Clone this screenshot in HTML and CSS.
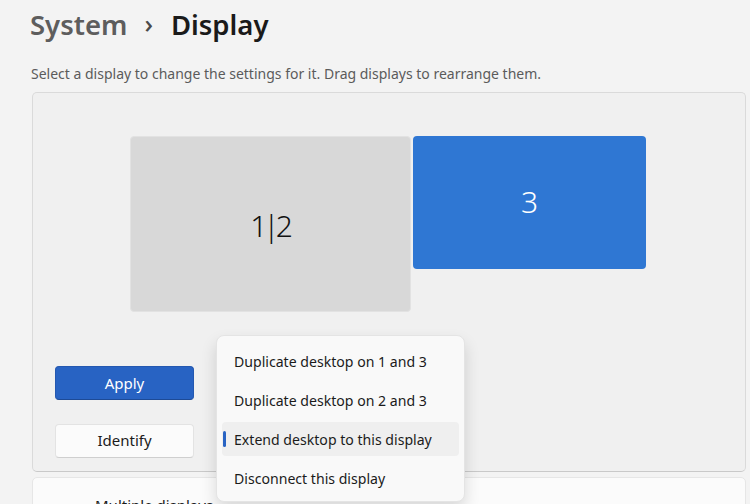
FILE: index.html
```html
<!DOCTYPE html>
<html>
	<head>
		<meta charset="UTF-8">
		<title>Settings - Display</title>
		<link rel="stylesheet" href="styles.css">
	</head>
	<body>
		<div id="page">
			<h1 class="breadcrumb">
				<span class="crumb">System</span>
				<span class="chevron">&#8250;</span>
				<span class="current">Display</span>
			</h1>
			<p class="hint">Select a display to change the settings for it. Drag displays to rearrange them.</p>

			<div class="panel">
				<!-- monitor layout, positions are the arrangement itself -->
				<div class="arrangement">
					<div class="monitor mon-12">1|2</div>
					<div class="monitor mon-3 selected">3</div>
				</div>
				<div class="actions">
					<div class="row">
						<button class="btn primary">Apply</button>
						<div class="combo"></div>
					</div>
					<div class="row">
						<button class="btn">Identify</button>
					</div>
				</div>

				<div class="menu">
					<div class="item">Duplicate desktop on 1 and 3</div>
					<div class="item">Duplicate desktop on 2 and 3</div>
					<div class="item active">Extend desktop to this display</div>
					<div class="item">Disconnect this display</div>
				</div>
			</div>

			<div class="card">
				<span class="card-title">Multiple displays</span>
			</div>
		</div>
	</body>
</html>
```

FILE: styles.css
```css
body {
	margin: 0;
	background-color: #f3f3f3;
	font-family: "Noto Sans", "Open Sans", sans-serif;
	color: #1b1b1b;
	overflow: hidden;
}
#page {
	padding: 0 4px 0 32px;
}
.breadcrumb {
	margin: 0;
	padding-top: 0;
	height: 49px;
	font-size: 27.5px;
	font-weight: 600;
	line-height: 40px;
	display: flex;
	align-items: center;
}
.crumb {
	color: #5d5d5d;
	margin-left: -2px;
}
.chevron {
	color: #4a4a4a;
	font-size: 26px;
	font-weight: 500;
	margin: -3px 18px 0 17px;
}
.current {
	color: #1a1a1a;
}
.hint {
	margin: 15px 0 0 -1px;
	font-size: 14px;
	line-height: 20px;
	color: #5b5b5b;
}
.panel {
	position: relative;
	margin-top: 8px;
	height: 380px;
	background-color: #f0f0f0;
	border: 1px solid #dadada;
	border-bottom-color: #c9c9c9;
	border-radius: 5px;
	box-sizing: border-box;
}
.arrangement {
	position: relative;
	height: 273px;
}
.monitor {
	position: absolute;
	display: flex;
	align-items: center;
	justify-content: center;
	border-radius: 4px;
	font-size: 30px;
	font-weight: 300;
}
.mon-12 {
	left: 97px;
	top: 43px;
	width: 281px;
	height: 176px;
	background-color: #d8d8d8;
	border: 1px solid #e2e2e2;
	box-sizing: border-box;
	color: #111111;
	letter-spacing: -4px;
	padding-right: 2px;
	padding-top: 2px;
}
.mon-3 {
	left: 380px;
	top: 43px;
	width: 233px;
	height: 133px;
	background-color: #2f77d3;
	color: #ffffff;
	padding-bottom: 3px;
	box-sizing: border-box;
}
.actions {
	padding-left: 22px;
}
.row {
	display: flex;
	gap: 22px;
	margin-bottom: 22px;
}
.btn {
	width: 139px;
	height: 34px;
	font-family: inherit;
	font-size: 15px;
	border-radius: 4px;
	border: 1px solid #e3e3e3;
	border-bottom-color: #cfcfcf;
	background-color: #fbfbfb;
	color: #1b1b1b;
	padding: 0 0 3px;
}
.btn.primary {
	background-color: #2863c3;
	border-color: #2458b0;
	border-bottom-color: #1d4a96;
	color: #ffffff;
	padding: 0;
}
.combo {
	width: 200px;
	height: 34px;
	border: 1px solid #e3e3e3;
	border-radius: 4px;
	background-color: #fbfbfb;
}
.menu {
	position: absolute;
	left: 183px;
	top: 242px;
	width: 249px;
	padding: 8px 0 6px;
	background-color: #f9f9f9;
	border: 1px solid #e4e4e4;
	border-radius: 8px;
	box-shadow: 0 8px 16px rgba(0, 0, 0, 0.14);
	box-sizing: border-box;
}
.item {
	position: relative;
	height: 34px;
	margin: 0 5px 5px;
	padding-left: 12px;
	display: flex;
	align-items: center;
	font-size: 14.1px;
	border-radius: 4px;
	color: #1b1b1b;
}
.item:last-child {
	margin-bottom: 0;
}
.item.active {
	background-color: #efefef;
}
.item.active::before {
	content: "";
	position: absolute;
	left: 1px;
	top: 9px;
	width: 3px;
	height: 16px;
	border-radius: 2px;
	background-color: #2863c3;
}
.card {
	margin-top: 5px;
	height: 60px;
	background-color: #fbfbfb;
	border: 1px solid #e6e6e6;
	border-radius: 5px;
	padding-left: 62px;
	padding-top: 17px;
	box-sizing: border-box;
	font-size: 15px;
}
```
